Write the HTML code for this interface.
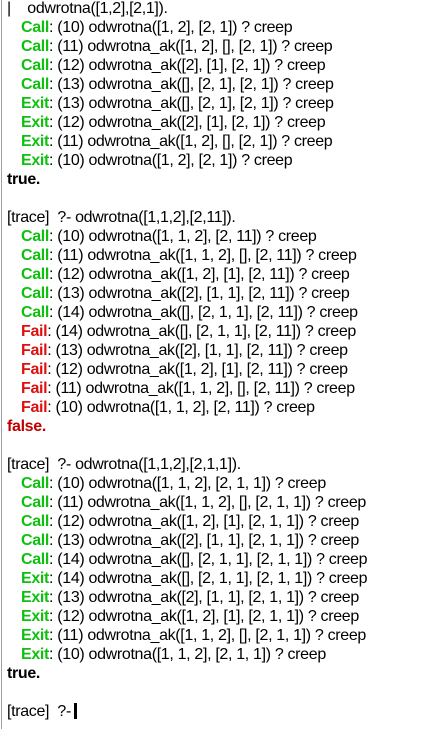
<!DOCTYPE html>
<html><head><meta charset="utf-8"><style>
html,body{margin:0;padding:0;background:#fff;width:422px;height:729px;overflow:hidden}
body{font-family:"Liberation Sans",Arial,sans-serif;font-size:16px;color:#000;position:relative;letter-spacing:-0.33px}
.bl{position:absolute;left:1px;top:0;width:1px;height:729px;background:#a0a0a0}
.w{position:absolute;left:7px;top:-1px}
.l{height:19px;line-height:19px;white-space:pre}
.i{padding-left:14px}
.g{color:#10c010;font-weight:bold}
.r{color:#e01010;font-weight:bold}
.b{font-weight:bold}
.rb{color:#c00000;font-weight:bold}
.cur{display:inline-block;width:3px;height:16px;background:#000;vertical-align:-3px;margin-left:3px}
</style></head><body>
<div class="bl"></div>
<div class="w">
<div class="l">|    odwrotna([1,2],[2,1]).</div>
<div class="l i"><span class="g">Call</span>: (10) odwrotna([1, 2], [2, 1]) ? creep</div>
<div class="l i"><span class="g">Call</span>: (11) odwrotna_ak([1, 2], [], [2, 1]) ? creep</div>
<div class="l i"><span class="g">Call</span>: (12) odwrotna_ak([2], [1], [2, 1]) ? creep</div>
<div class="l i"><span class="g">Call</span>: (13) odwrotna_ak([], [2, 1], [2, 1]) ? creep</div>
<div class="l i"><span class="g">Exit</span>: (13) odwrotna_ak([], [2, 1], [2, 1]) ? creep</div>
<div class="l i"><span class="g">Exit</span>: (12) odwrotna_ak([2], [1], [2, 1]) ? creep</div>
<div class="l i"><span class="g">Exit</span>: (11) odwrotna_ak([1, 2], [], [2, 1]) ? creep</div>
<div class="l i"><span class="g">Exit</span>: (10) odwrotna([1, 2], [2, 1]) ? creep</div>
<div class="l b">true.</div>
<div class="l"> </div>
<div class="l">[trace]  ?- odwrotna([1,1,2],[2,11]).</div>
<div class="l i"><span class="g">Call</span>: (10) odwrotna([1, 1, 2], [2, 11]) ? creep</div>
<div class="l i"><span class="g">Call</span>: (11) odwrotna_ak([1, 1, 2], [], [2, 11]) ? creep</div>
<div class="l i"><span class="g">Call</span>: (12) odwrotna_ak([1, 2], [1], [2, 11]) ? creep</div>
<div class="l i"><span class="g">Call</span>: (13) odwrotna_ak([2], [1, 1], [2, 11]) ? creep</div>
<div class="l i"><span class="g">Call</span>: (14) odwrotna_ak([], [2, 1, 1], [2, 11]) ? creep</div>
<div class="l i"><span class="r">Fail</span>: (14) odwrotna_ak([], [2, 1, 1], [2, 11]) ? creep</div>
<div class="l i"><span class="r">Fail</span>: (13) odwrotna_ak([2], [1, 1], [2, 11]) ? creep</div>
<div class="l i"><span class="r">Fail</span>: (12) odwrotna_ak([1, 2], [1], [2, 11]) ? creep</div>
<div class="l i"><span class="r">Fail</span>: (11) odwrotna_ak([1, 1, 2], [], [2, 11]) ? creep</div>
<div class="l i"><span class="r">Fail</span>: (10) odwrotna([1, 1, 2], [2, 11]) ? creep</div>
<div class="l rb">false.</div>
<div class="l"> </div>
<div class="l">[trace]  ?- odwrotna([1,1,2],[2,1,1]).</div>
<div class="l i"><span class="g">Call</span>: (10) odwrotna([1, 1, 2], [2, 1, 1]) ? creep</div>
<div class="l i"><span class="g">Call</span>: (11) odwrotna_ak([1, 1, 2], [], [2, 1, 1]) ? creep</div>
<div class="l i"><span class="g">Call</span>: (12) odwrotna_ak([1, 2], [1], [2, 1, 1]) ? creep</div>
<div class="l i"><span class="g">Call</span>: (13) odwrotna_ak([2], [1, 1], [2, 1, 1]) ? creep</div>
<div class="l i"><span class="g">Call</span>: (14) odwrotna_ak([], [2, 1, 1], [2, 1, 1]) ? creep</div>
<div class="l i"><span class="g">Exit</span>: (14) odwrotna_ak([], [2, 1, 1], [2, 1, 1]) ? creep</div>
<div class="l i"><span class="g">Exit</span>: (13) odwrotna_ak([2], [1, 1], [2, 1, 1]) ? creep</div>
<div class="l i"><span class="g">Exit</span>: (12) odwrotna_ak([1, 2], [1], [2, 1, 1]) ? creep</div>
<div class="l i"><span class="g">Exit</span>: (11) odwrotna_ak([1, 1, 2], [], [2, 1, 1]) ? creep</div>
<div class="l i"><span class="g">Exit</span>: (10) odwrotna([1, 1, 2], [2, 1, 1]) ? creep</div>
<div class="l b">true.</div>
<div class="l"> </div>
<div class="l">[trace]  ?-<span class="cur"></span></div>
</div>
</body></html>
